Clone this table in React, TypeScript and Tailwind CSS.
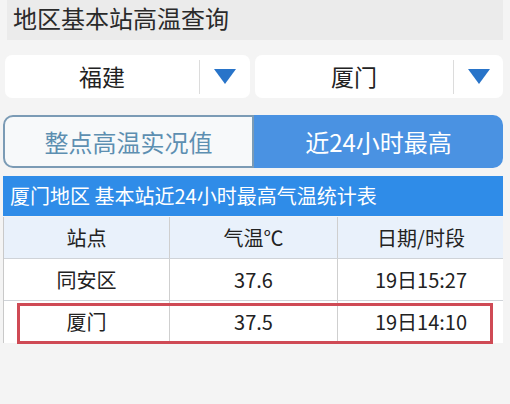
import React from "react";

function Triangle() {
  return (
    <svg width="22" height="15" viewBox="0 0 22 15">
      <polygon points="0,0 22,0 11,15" fill="#2874c9" />
    </svg>
  );
}

function Select({ label, w, arrowW }: { label: string; w: string; arrowW: string }) {
  return (
    <div className={`${w} h-[43px] bg-white rounded-[7px] flex items-center`}>
      <div className="flex-1 text-center text-[23px] text-[#222]">{label}</div>
      <div className="w-px h-[34px] bg-[#dcdcdc]" />
      <div className={`${arrowW} flex justify-center items-center`}>
        <Triangle />
      </div>
    </div>
  );
}

const rows = [
  ["站点", "气温℃", "日期/时段"],
  ["同安区", "37.6", "19日15:27"],
  ["厦门", "37.5", "19日14:10"],
];

export default function App() {
  return (
    <div
      className="w-[510px] h-[404px] bg-[#f4f4f4] overflow-hidden relative"
      style={{ fontFamily: '"Noto Sans CJK SC", "Noto Sans", sans-serif' }}
    >
      <div className="mx-[7px] h-[40px] bg-[#ebebeb] pl-[6px] text-[24px] leading-[36px] text-[#2a2a2a]">
        地区基本站高温查询
      </div>
      <div className="mt-[15px] pl-[5px] flex gap-[5px]">
        <Select label="福建" w="w-[245px]" arrowW="w-[50px]" />
        <Select label="厦门" w="w-[248px]" arrowW="w-[49px]" />
      </div>
      <div className="mt-[17px] mx-[3px] w-[500px] h-[53px] flex">
        <div className="w-[251px] h-full border-[2px] border-[#7b9bb5] rounded-l-[10px] bg-[#f7f9fa] flex items-center justify-center text-[24px] text-[#5d8fb1]">
          整点高温实况值
        </div>
        <div className="flex-1 h-full rounded-r-[10px] bg-[#4a92e2] flex items-center justify-center text-[24px] text-white">
          近24小时最高
        </div>
      </div>
      <div className="mt-[8px] mx-[3px] w-[500px] h-[40px] bg-[#2f8ce8] text-white text-[20px] leading-[40px] pl-[7px]">
        厦门地区 基本站近24小时最高气温统计表
      </div>
      <div className="mt-[1px] mx-[3px] w-[500px] border-l border-[#c9c9c9] bg-white">
        {rows.map((r, i) => (
          <div
            key={i}
            className={`grid grid-cols-[166px_168px_166px] h-[42px] ${i === 0 ? "bg-[#e9f1fb]" : "bg-white"} ${i < 2 ? "border-b border-[#cfd3d8]" : ""}`}
          >
            {r.map((c, j) => (
              <div
                key={j}
                className={`flex items-center justify-center text-[20px] text-[#222] ${j < 2 ? "border-r border-[#cfcfcf]" : ""}`}
              >
                {c}
              </div>
            ))}
          </div>
        ))}
      </div>
      <div className="absolute left-[17px] top-[303px] w-[476px] h-[41px] border-[3px] border-[#cf4a55]" />
    </div>
  );
}
